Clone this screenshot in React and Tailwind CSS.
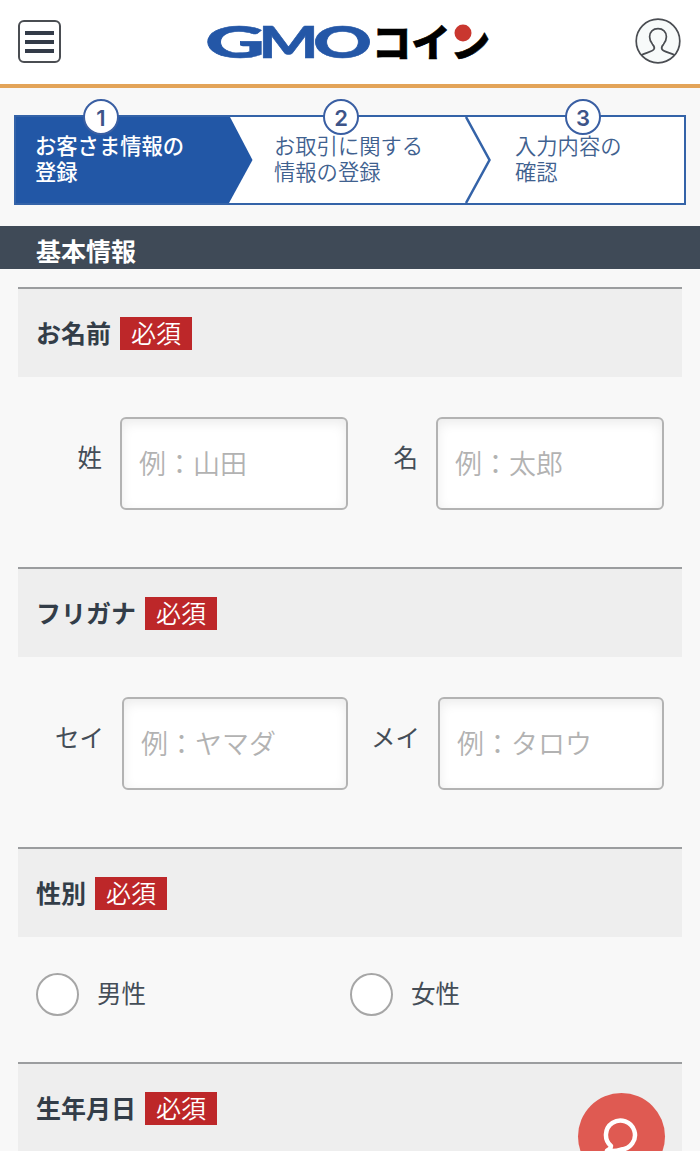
import clsx from "clsx";

const steps = [
    { no: "1", lines: ["お客さま情報の", "登録"] },
    { no: "2", lines: ["お取引に関する", "情報の登録"] },
    { no: "3", lines: ["入力内容の", "確認"] },
];

function Logo() {
    return (
        <svg width="300" height="84" viewBox="198 0 300 84" role="img" aria-label="GMOコイン">
            <text y="57.5" fill="#2457a7" stroke="#2457a7" strokeWidth="0.5" className="font-['Lato'] text-[44px] font-black">
                <tspan x="205" textLength="60" lengthAdjust="spacingAndGlyphs">G</tspan>
                <tspan x="258.5" textLength="60" lengthAdjust="spacingAndGlyphs">M</tspan>
                <tspan x="313" textLength="59" lengthAdjust="spacingAndGlyphs">O</tspan>
            </text>
            <text x="372" y="56.5" textLength="118" lengthAdjust="spacingAndGlyphs" fill="#000" stroke="#000" strokeWidth="0.6" className="font-['Noto_Sans_CJK_JP',sans-serif] text-[38.5px] font-black">コイン</text>
            <circle cx="463" cy="33" r="10.5" fill="#fff" />
            <circle cx="463" cy="33" r="8.5" fill="#c9372f" />
        </svg>
    );
}

function Header() {
    return (
        <header className="flex h-[88px] items-start justify-between border-b-4 border-[#e3a459] bg-white pr-[19px] pl-[18px]">
            <button type="button" aria-label="メニュー" className="mt-5 flex h-[43px] w-[43px] flex-col items-center justify-center gap-[5px] rounded-md border-2 border-[#4a4d52]">
                <span className="h-1 w-[29px] bg-[#333b48]" />
                <span className="h-1 w-[29px] bg-[#333b48]" />
                <span className="h-1 w-[29px] bg-[#333b48]" />
            </button>
            <Logo />
            <button type="button" aria-label="マイページ" className="mt-[18px]">
                <svg width="46" height="46" viewBox="0 0 46 46" fill="none" stroke="#4a4d52" strokeWidth="1.7">
                    <circle cx="23" cy="23" r="21.8" fill="#f7fafa" />
                    <path d="M6.2 37.2C10 35 17.500 33.800 19 31.200C20 29.500 19.500 28.400 17.500 26.300C15.500 24 14.600 21.500 14.600 18.800C14.600 14 18 10.700 23 10.700S31.400 14 31.400 18.800C31.400 21.500 30.500 24 28.500 26.300C26.500 28.400 26 29.500 27 31.200C28.500 33.800 36 35 39.800 37.200" />
                </svg>
            </button>
        </header>
    );
}

function StepText({ step, active, className, badge }) {
    return (
        <li className={clsx("relative pt-[15px] text-[21.3px] leading-[26px]", active ? "bg-[#2257a6] font-medium text-white" : "bg-white font-[350] text-[#3f618f]", className)}>
            <span className={clsx("absolute -top-[18px] flex h-9 w-9 items-center justify-center rounded-full border-2 border-[#3a5fa3] bg-white pt-0.5 font-['Inter',sans-serif] text-[22px] font-semibold text-[#3d5489]", badge)}>
                {step.no}
            </span>
            {step.lines.map((line) => (
                <span key={line} className="block whitespace-nowrap">{line}</span>
            ))}
        </li>
    );
}

function Steps() {
    return (
        <ol className="mx-[14px] mt-[27px] flex h-[90px] border-2 border-[#3463a8] bg-white">
            <StepText step={steps[0]} active className="w-[213px] pl-[19px]" badge="left-[67px]" />
            <li aria-hidden="true">
                <svg width="24" height="86" viewBox="0 0 24 86">
                    <path d="M0 0h1l22.5 43L0 86z" fill="#2257a6" />
                </svg>
            </li>
            <StepText step={steps[1]} className="w-[212px] pl-[21px]" badge="left-[70px]" />
            <li aria-hidden="true">
                <svg width="26" height="86" viewBox="0 0 26 86" fill="none" stroke="#3463a8" strokeWidth="2.5">
                    <path d="M1 0l23.5 43L1 86" />
                </svg>
            </li>
            <StepText step={steps[2]} className="flex-1 pl-6" badge="left-[74px]" />
        </ol>
    );
}

function SectionHead({ title }) {
    return (
        <div className="flex h-[90px] items-center gap-[9px] border-t-2 border-[#9b9d9f] bg-[#eee] pl-[18px]">
            <h3 className="pb-[3px] text-[25px] leading-8 font-bold text-[#333d48]">{title}</h3>
            <span className="mt-px flex h-[33px] w-[72px] items-center justify-center bg-[#bd2729] pb-1 text-[25px] leading-8 font-[350] text-white">必須</span>
        </div>
    );
}

function Field({ label, placeholder, name, wide }) {
    return (
        <label className="flex justify-end gap-[18px]">
            <span className="mt-6 text-[24.5px] leading-8 whitespace-nowrap text-[#444d57]">{label}</span>
            <input
                type="text"
                name={name}
                placeholder={placeholder}
                className={clsx("h-[93px] rounded-md border-2 border-[#b3b3b3] bg-white px-[17px] pb-[3px] text-[27px] font-[350] shadow-[inset_0_4px_12px_rgba(0,0,0,0.08)] placeholder:text-[#b2b2b2]", wide ? "w-[228px]" : "w-[226px]")}
            />
        </label>
    );
}

function Radio({ label, value }) {
    return (
        <label className="flex w-[314px] items-center gap-[18px]">
            <input type="radio" name="gender" value={value} className="h-[43px] w-[43px] appearance-none rounded-full border-2 border-[#a6a6a6] bg-white" />
            <span className="pb-[3px] text-[24.5px] leading-8 text-[#444d57]">{label}</span>
        </label>
    );
}

function ChatButton() {
    return (
        <button type="button" aria-label="チャット" className="absolute top-[1093px] left-[577.5px] h-[87px] w-[87px] rounded-full bg-[#df5a52]">
            <svg width="87" height="87" viewBox="0 0 87 87" fill="none" stroke="#fff" strokeWidth="4.5" strokeLinejoin="round" strokeLinecap="round">
                <path d="M33 53A14.5 14.5 0 1 1 43 56.5c-4 1.5-9 2-14 1 2.500-1 4-2.500 4-4.500z" />
            </svg>
        </button>
    );
}

export default function App() {
    return (
        <div className="relative h-[1151px] w-[700px] overflow-hidden bg-[#f8f8f8] font-['Noto_Sans_CJK_JP',sans-serif]">
            <Header />
            <Steps />
            <h2 className="mt-[21px] h-[43px] bg-[#3f4a57] pl-9 text-[25px] leading-[48px] font-bold text-white">基本情報</h2>
            <form className="mx-[18px] mt-[18px]">
                <section className="h-[280px]">
                    <SectionHead title="お名前" />
                    <div className="mt-10 grid grid-cols-[330px_316px]">
                        <Field label="姓" name="lastName" placeholder="例：山田" wide />
                        <Field label="名" name="firstName" placeholder="例：太郎" wide />
                    </div>
                </section>
                <section className="h-[280px]">
                    <SectionHead title="フリガナ" />
                    <div className="mt-10 grid grid-cols-[330px_316px]">
                        <Field label="セイ" name="lastNameKana" placeholder="例：ヤマダ" />
                        <Field label="メイ" name="firstNameKana" placeholder="例：タロウ" />
                    </div>
                </section>
                <section className="h-[215px]">
                    <SectionHead title="性別" />
                    <div className="mt-9 flex pl-[18px]">
                        <Radio label="男性" value="male" />
                        <Radio label="女性" value="female" />
                    </div>
                </section>
                <section>
                    <SectionHead title="生年月日" />
                </section>
            </form>
            <ChatButton />
        </div>
    );
}
